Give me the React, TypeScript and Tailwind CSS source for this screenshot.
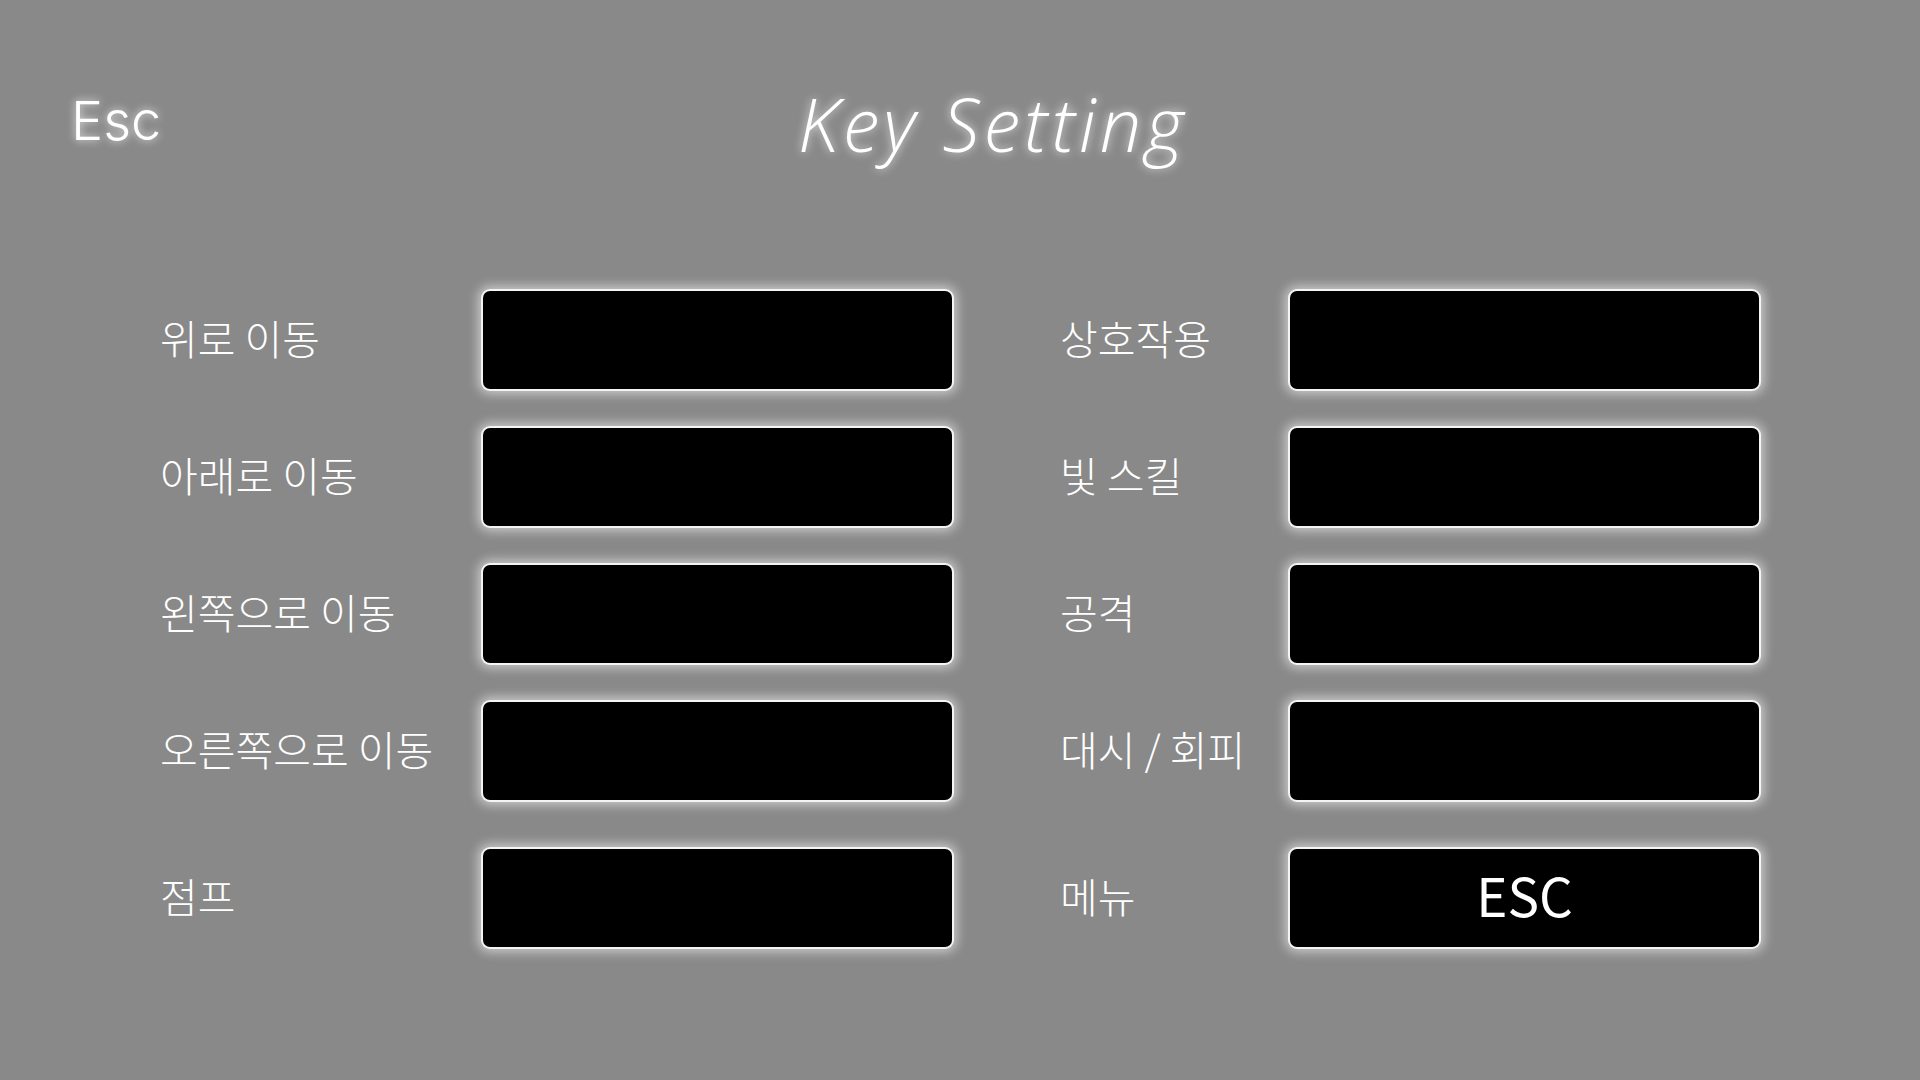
const rows = [
  { left: '위로 이동', right: '상호작용', leftKey: '', rightKey: '' },
  { left: '아래로 이동', right: '빛 스킬', leftKey: '', rightKey: '' },
  { left: '왼쪽으로 이동', right: '공격', leftKey: '', rightKey: '' },
  { left: '오른쪽으로 이동', right: '대시 / 회피', leftKey: '', rightKey: '' },
  { left: '점프', right: '메뉴', leftKey: '', rightKey: 'ESC' },
];

const korean = "font-['Noto_Sans_CJK_KR',sans-serif]";

function KeyBox({ value }: { value: string }) {
  return (
    <div
      className={`w-[469px] h-[98px] shrink-0 rounded-[7px] bg-black flex items-center justify-center text-white text-[53px] leading-none shadow-[0_0_0_2px_#f4f4f4,0_0_11px_5px_rgba(255,255,255,0.55)] ${korean}`}
    >
      <span className="pb-[7px]">{value}</span>
    </div>
  );
}

export default function App() {
  return (
    <div className="w-full h-[1080px] bg-[#898989] overflow-hidden">
      {/* Header */}
      <div className="flex items-start pt-[87px]">
        <div className="w-[798px] pl-[71px] pt-[7px] shrink-0">
          <span className="font-['Inter',sans-serif] font-light text-[54px] leading-none text-white [text-shadow:0_0_8px_rgba(255,255,255,0.85)]">
            Esc
          </span>
        </div>
        <h1 className="font-['Open_Sans',sans-serif] italic font-[350] tracking-[4px] text-[74px] leading-none text-white [text-shadow:0_0_10px_rgba(255,255,255,0.8)]">
          Key Setting
        </h1>
      </div>

      {/* Key rows */}
      <div className="flex flex-col gap-[39px] pl-[160px] mt-[130px]">
        {rows.map((row, i) => (
          <div key={i} className={`flex items-center ${i === rows.length - 1 ? 'mt-[10px]' : ''}`}>
            <div className={`w-[323px] shrink-0 pb-[5px] text-white text-[41px] font-light leading-none ${korean}`}>
              {row.left}
            </div>
            <KeyBox value={row.leftKey} />
            <div className={`w-[230px] ml-[108px] shrink-0 pb-[5px] text-white text-[41px] font-light leading-none ${korean}`}>
              {row.right}
            </div>
            <KeyBox value={row.rightKey} />
          </div>
        ))}
      </div>
    </div>
  );
}
